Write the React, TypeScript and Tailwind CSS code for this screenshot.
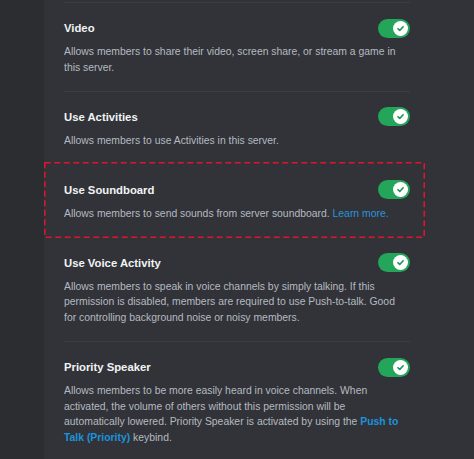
import React from "react";

function Toggle() {
  return (
    <div className="w-[32px] h-[19px] rounded-full bg-[#23a55a] flex items-center justify-end pr-[2px] shrink-0">
      <div className="w-[15px] h-[15px] rounded-full bg-white flex items-center justify-center">
        <svg width="9" height="9" viewBox="0 0 12 12">
          <path d="M2.6 6.3 L5 8.6 L9.5 3.7" stroke="#1f9553" strokeWidth="2.2" fill="none" strokeLinecap="round" strokeLinejoin="round" />
        </svg>
      </div>
    </div>
  );
}

type RowProps = {
  title: string;
  children: React.ReactNode;
  divider?: boolean;
  highlight?: boolean;
};

function Row({ title, children, divider = true, highlight = false }: RowProps) {
  return (
    <div className={"relative pt-[16px] pb-[15.5px] border-b " + (divider ? "border-[#3b3d43]" : "border-transparent")}>
      {highlight && (
        <svg className="absolute left-[-20px] top-[-3px] w-[381px] h-[76px] pointer-events-none" viewBox="0 0 381 76">
          <rect x="0.75" y="0.75" width="379.5" height="74.5" fill="none" stroke="#e0142f" strokeWidth="1.6" strokeDasharray="6 3.5" />
        </svg>
      )}
      <div className="flex items-center justify-between h-[18px]">
        <span className="text-[11.3px] font-bold text-[#f2f3f5] leading-[18px]">{title}</span>
        <Toggle />
      </div>
      <p className="mt-[7px] text-[10.4px] leading-[15.6px] text-[#b5bac1] whitespace-nowrap">{children}</p>
    </div>
  );
}

export default function App() {
  return (
    <div className="w-[474px] h-[459px] flex bg-[#313338] overflow-hidden font-['Liberation_Sans',Arial,sans-serif]">
      <div className="w-[44px] shrink-0 bg-[#2b2d31]" />
      <div className="flex-1 pl-[20px] pt-[2px]">
        <div className="w-[346px]">
          <div className="border-t border-[#3b3d43]" />
          <Row title="Video">
            Allows members to share their video, screen share, or stream a game in
            <br />
            this server.
          </Row>
          <Row title="Use Activities" divider={false}>
            Allows members to use Activities in this server.
          </Row>
          <Row title="Use Soundboard" divider={false} highlight>
            Allows members to send sounds from server soundboard.{" "}
            <span className="text-[#2a93dc]">Learn more.</span>
          </Row>
          <Row title="Use Voice Activity">
            Allows members to speak in voice channels by simply talking. If this
            <br />
            permission is disabled, members are required to use Push-to-talk. Good
            <br />
            for controlling background noise or noisy members.
          </Row>
          <Row title="Priority Speaker" divider={false}>
            Allows members to be more easily heard in voice channels. When
            <br />
            activated, the volume of others without this permission will be
            <br />
            automatically lowered. Priority Speaker is activated by using the{" "}
            <span className="font-bold text-[#1d92dd]">Push to</span>
            <br />
            <span className="font-bold text-[#1d92dd]">Talk (Priority)</span> keybind.
          </Row>
        </div>
      </div>
    </div>
  );
}
